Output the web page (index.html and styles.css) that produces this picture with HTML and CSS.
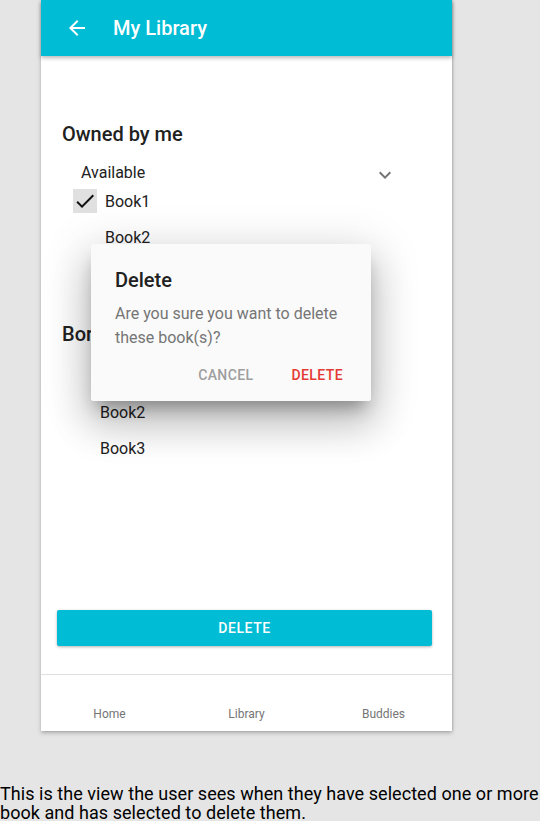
FILE: index.html
```html
<!DOCTYPE html>
<html>
<head>
<meta charset="utf-8">
<link rel="stylesheet" href="styles.css">
</head>
<body>
<div class="phone">
  <header class="appbar">
    <svg class="back" width="24" height="24" viewBox="0 0 24 24"><path fill="#fff" d="M20 11H7.83l5.59-5.59L12 4l-8 8 8 8 1.41-1.41L7.83 13H20v-2z"/></svg>
    <span class="title">My Library</span>
  </header>
  <main class="content">
    <section class="section">
      <h2 class="heading">Owned by me</h2>
      <div class="avail">
        <span>Available</span>
        <svg class="chev" width="24" height="24" viewBox="0 0 24 24"><path fill="#757575" d="M16.59 8.59L12 13.17 7.41 8.59 6 10l6 6 6-6z"/></svg>
      </div>
      <ul class="books owned">
        <li class="book"><span class="check on"><svg width="24" height="24" viewBox="0 0 24 24"><path fill="#111" d="M9 16.17L4.83 12l-1.42 1.41L9 19 21 7l-1.41-1.41z"/></svg></span><span>Book1</span></li>
        <li class="book"><span class="check"></span><span>Book2</span></li>
        <li class="book"></li>
      </ul>
    </section>
    <section class="section borrowed">
      <h2 class="heading">Borrowed</h2>
      <ul class="books plain">
        <li class="book"></li>
        <li class="book">Book2</li>
        <li class="book">Book3</li>
      </ul>
    </section>
  </main>
  <div class="action">
    <button class="delete-btn">DELETE</button>
  </div>
  <nav class="nav">
    <span>Home</span>
    <span>Library</span>
    <span>Buddies</span>
  </nav>
  <div class="dialog">
    <h3 class="dtitle">Delete</h3>
    <p class="dbody">Are you sure you want to delete these book(s)?</p>
    <div class="dactions">
      <span class="cancel">CANCEL</span>
      <span class="confirm">DELETE</span>
    </div>
  </div>
</div>
<p class="caption">This is the view the user sees when they have selected one or more book and has selected to delete them.</p>
</body>
</html>
```

FILE: styles.css
```css
* { box-sizing: border-box; }
html, body { margin: 0; padding: 0; }
body {
  background: #e5e5e5;
  font-family: Roboto, "Noto Sans", sans-serif;
  color: #212121;
  width: 540px;
  height: 821px;
  overflow: hidden;
}
.phone {
  position: relative;
  margin-left: 41px;
  width: 411px;
  height: 731px;
  background: #fff;
  box-shadow: 0 2px 4px rgba(0,0,0,0.25), 1px 0 2px rgba(0,0,0,0.12);
  display: flex;
  flex-direction: column;
}
.appbar {
  height: 56px;
  background: #00bcd4;
  display: flex;
  align-items: center;
  padding-left: 24px;
  box-shadow: 0 2px 4px rgba(0,0,0,0.28);
  position: relative;
  z-index: 1;
  flex-shrink: 0;
}
.back { display: block; }
.title {
  margin-left: 24px;
  color: #fff;
  font-size: 20px;
  font-weight: 500;
}
.content {
  flex: 1;
  padding: 66px 0 0 21px;
}
.section { margin: 0; }
.heading {
  margin: 0;
  font-size: 20px;
  font-weight: 500;
  line-height: 24px;
  color: #212121;
}
.avail {
  margin: 15px 0 0 19px;
  height: 22px;
  width: 316px;
  display: flex;
  align-items: center;
  justify-content: space-between;
  font-size: 16px;
}
.chev { display: block; margin-top: 6px; }
.books { list-style: none; margin: 0; padding: 0; }
.book {
  height: 36px;
  display: flex;
  align-items: center;
  font-size: 16px;
}
.owned { padding-left: 11px; }
.check {
  width: 24px;
  height: 24px;
  margin-right: 8px;
}
.check.on { background: #e0e0e0; }
.check svg { display: block; }
.borrowed { margin-top: 31px; }
.plain { margin-top: 12px; padding-left: 38px; }
.action {
  padding: 0 20px 28px 16px;
  flex-shrink: 0;
}
.delete-btn {
  display: block;
  width: 100%;
  height: 36px;
  border: 0;
  border-radius: 2px;
  background: #00bcd4;
  color: #fff;
  font-family: Roboto, sans-serif;
  font-size: 14px;
  font-weight: 500;
  letter-spacing: 0.6px;
  box-shadow: 0 1px 3px rgba(0,0,0,0.3);
}
.nav {
  height: 57px;
  border-top: 1px solid #e0e0e0;
  display: grid;
  grid-template-columns: repeat(3, 1fr);
  align-items: end;
  padding-bottom: 9px;
  flex-shrink: 0;
}
.nav span {
  text-align: center;
  font-size: 12px;
  line-height: 16px;
  color: #757575;
}
.dialog {
  position: absolute;
  left: 50px;
  top: 244px;
  width: 280px;
  height: 157px;
  background: #fafafa;
  border-radius: 2px;
  padding: 24px 0 8px 24px;
  box-shadow: 0 12px 16px -6px rgba(0,0,0,0.32), 0 24px 38px 3px rgba(0,0,0,0.16), 0 9px 46px 8px rgba(0,0,0,0.12);
  z-index: 2;
}
.dtitle {
  margin: 0;
  font-size: 20px;
  font-weight: 500;
  line-height: 24px;
  color: #212121;
}
.dbody {
  margin: 10px 0 0;
  padding-right: 24px;
  font-size: 16px;
  line-height: 24px;
  color: #757575;
}
.dactions {
  margin-top: 7px;
  height: 36px;
  display: flex;
  justify-content: flex-end;
  align-items: center;
  gap: 38px;
  padding-right: 28px;
  font-size: 14px;
  font-weight: 500;
  letter-spacing: 0.4px;
}
.cancel { color: #9e9e9e; }
.confirm { color: #e53935; }
.caption {
  margin: 53px 0 0;
  font-size: 18px;
  line-height: 19px;
  letter-spacing: 0.05px;
  color: #000;
}
```
